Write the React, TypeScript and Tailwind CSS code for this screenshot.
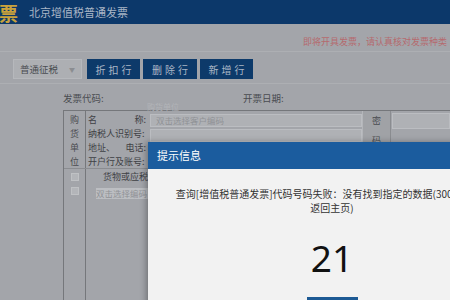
import React from "react";

const App = () => {
  return (
    <div className="relative w-[450px] h-[300px] overflow-hidden bg-[#a3a5aa] font-['Noto_Sans_CJK_SC',sans-serif]">
      {/* top bar */}
      <header className="h-6 bg-[#0c386a] flex items-center">
        <span className="w-[20px] -ml-[1px] text-[19px] leading-none font-bold text-[#c9a23c]">票</span>
        <span className="ml-[10px] text-[11px] text-[#aab6c6]">北京增值税普通发票</span>
      </header>

      <div className="h-[28px] pt-2 pr-[3px] flex items-center justify-end border-b border-[#adafb3]">
        <span className="text-[9px] leading-none text-[#b56a6e]">即将开具发票，请认真核对发票种类</span>
      </div>

      {/* toolbar */}
      <div className="h-[32px] pt-[7px] flex items-start border-b border-[#adafb3]">
        <div className="ml-[13px] w-[69px] h-5 px-[6px] bg-[#adafb3] border border-[#b6b8bc] flex items-center justify-between">
          <span className="text-[9.5px] text-[#4a4d52]">普通征税</span>
          <span className="text-[6px] text-[#8b8d91]">▼</span>
        </div>
        <div className="ml-[5px] flex gap-[3px]">
          <button className="w-[53px] h-5 pl-[3px] bg-[#0d3a6a] text-[10px] tracking-[3px] text-[#aab6c6]">折扣行</button>
          <button className="w-[54px] h-5 pl-[3px] bg-[#0d3a6a] text-[10px] tracking-[3px] text-[#aab6c6]">删除行</button>
          <button className="w-[53px] h-5 pl-[3px] bg-[#0d3a6a] text-[10px] tracking-[3px] text-[#aab6c6]">新增行</button>
        </div>
      </div>

      <div className="h-[26px] pt-[2px] flex items-center text-[9.5px] text-[#4a4c51]">
        <span className="ml-[63px] w-[180px]">发票代码:</span>
        <span>开票日期:</span>
      </div>

      {/* invoice table */}
      <div className="ml-[63px] h-[200px] border-l border-t border-[#75777b]">
        <div className="flex h-[58px] border-b border-[#8a8c90]">
          <div className="w-[22px] pt-[2px] border-r border-[#75777b] flex flex-col items-center text-[9px] leading-[14px] text-[#4a4c50]">
            <span>购</span>
            <span>货</span>
            <span>单</span>
            <span>位</span>
          </div>
          <div className="w-[63px] pl-[2px] pr-[3px] pt-[2px] text-[9px] leading-[14px] text-[#3f4145]">
            <div className="flex justify-between"><span>名</span><span>称:</span></div>
            <div>纳税人识别号:</div>
            <div className="flex justify-between"><span>地址、</span><span>电话:</span></div>
            <div>开户行及账号:</div>
          </div>
          <div className="w-[213px] pl-[1px] pt-[3px] flex flex-col gap-[2px]">
            <div className="h-[13px] pl-[5px] bg-[#afb1b5] border border-[#bbbdc1] text-[8.5px] leading-[11px] text-[#909296]">双击选择客户编码</div>
            <div className="h-[13px] bg-[#afb1b5] border border-[#bbbdc1]" />
          </div>
          <div className="w-[28px] pt-[3px] bg-[#a0a2a6] border-l border-[#b4b6ba] flex flex-col items-center gap-[6px] text-[9px] leading-[14px] text-[#4a4c50]">
            <span>密</span>
            <span>码</span>
          </div>
          <div className="flex-1 pt-[2px] border-l border-[#8a8c90]">
            <div className="h-[16px] ml-[1px] bg-[#afb1b5] border border-[#bbbdc1]" />
          </div>
        </div>

        <div className="flex h-full">
          <div className="w-[22px] pt-[4px] border-r border-[#75777b] flex flex-col items-center gap-[6px]">
            <span className="w-2 h-2 bg-[#b3b5b9] border border-[#bfc1c4]" />
            <span className="w-2 h-2 bg-[#b3b5b9] border border-[#bfc1c4]" />
          </div>
          <div className="flex-1 pl-[10px] pt-[1px]">
            <div className="pl-[7px] text-[9px] leading-[14px] text-[#3f4145]">货物或应税劳务、服务名称</div>
            <div className="w-[53px] h-[11px] mt-[4px] bg-[#bcbec2] text-[8.5px] leading-[11px] text-[#909296] whitespace-nowrap overflow-hidden">双击选择编码</div>
          </div>
        </div>
      </div>

      {/* faint hint under the dialog */}
      <span className="absolute left-[147px] top-[101px] text-[8px] text-[#b2b4b8]">购货单位</span>

      {/* dialog */}
      <div className="absolute left-[148px] top-[142px] w-[368px] h-[200px] bg-[#f2f2f2] shadow-[-2px_0_6px_rgba(0,0,0,0.3)]">
        <div className="h-[27px] pl-[9px] bg-[#1b5c9e] flex items-center text-[11px] text-white">提示信息</div>
        <div className="pt-[18px] flex flex-col items-center">
          <p className="text-center text-[10px] leading-[14px] text-[#333333]">
            查询[增值税普通发票]代码号码失败：没有找到指定的数据(3001，即将
            <br />
            返回主页)
          </p>
          <div className="mt-[24px] text-[37px] leading-none text-[#111111] font-['Noto_Sans',sans-serif]">21</div>
          <button className="mt-[21px] w-[51px] h-[24px] bg-[#1d5a94] text-[10px] text-white">确定</button>
        </div>
      </div>
    </div>
  );
};

export default App;
